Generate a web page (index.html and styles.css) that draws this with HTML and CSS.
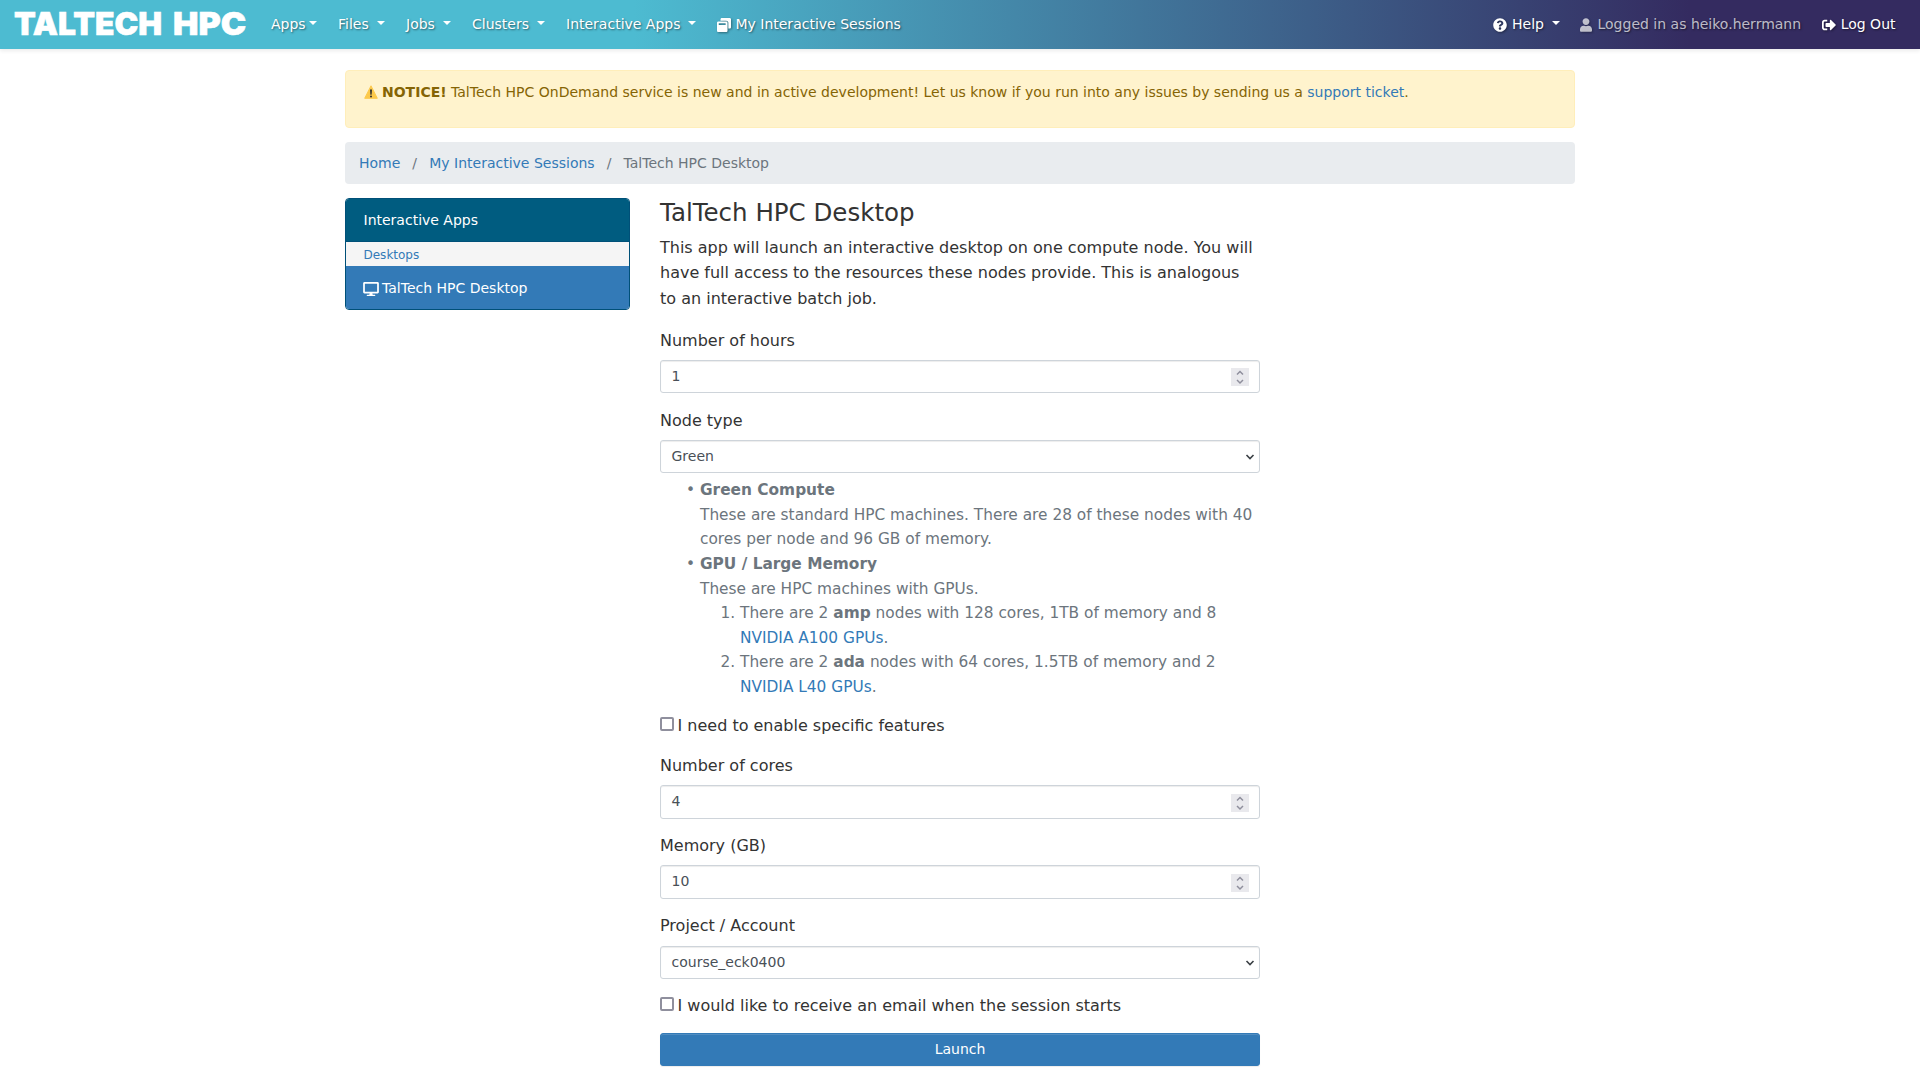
FILE: index.html
```html
<!DOCTYPE html>
<html lang="en">
<head>
<meta charset="utf-8">
<title>TalTech HPC Desktop</title>
<link rel="stylesheet" href="styles.css">
</head>
<body>
<nav class="navbar">
  <a class="brand"><svg width="233" height="49" viewBox="0 0 233 49"><text class="brand-text" y="35.2"><tspan x="-1" textLength="148" lengthAdjust="spacingAndGlyphs">TALTECH</tspan> <tspan x="158" textLength="73" lengthAdjust="spacingAndGlyphs">HPC</tspan></text></svg></a>
  <a class="nav-item apps">Apps<i class="caret"></i></a>
  <a class="nav-item files">Files <i class="caret"></i></a>
  <a class="nav-item jobs">Jobs <i class="caret"></i></a>
  <a class="nav-item clusters">Clusters <i class="caret"></i></a>
  <a class="nav-item interactive">Interactive Apps <i class="caret"></i></a>
  <a class="nav-item sessions"><svg class="icon" width="14" height="14" viewBox="0 0 512 512"><path d="M512 48v288c0 26.500-21.500 48-48 48h-48V176c0-44.100-35.900-80-80-80H128V48c0-26.500 21.500-48 48-48h288c26.500 0 48 21.500 48 48zM384 176v288c0 26.500-21.500 48-48 48H48c-26.500 0-48-21.500-48-48V176c0-26.500 21.500-48 48-48h288c26.500 0 48 21.500 48 48zm-68 28c0-6.600-5.400-12-12-12H76c-6.600 0-12 5.400-12 12v52h252v-52z"/></svg> My Interactive Sessions</a>
  <div class="nav-right">
    <a class="nav-item"><svg class="icon" width="14" height="14" viewBox="0 0 512 512"><path d="M504 256c0 137-111 248-248 248S8 393 8 256 119 8 256 8s248 111 248 248zM262.700 90c-54.500 0-89.300 23-116.500 63.800-3.500 5.300-2.400 12.400 2.700 16.300l34.700 26.300c5.200 3.900 12.600 3 16.700-2.100 17.900-22.700 30.100-35.800 57.300-35.800 20.400 0 45.700 13.100 45.700 33 0 15-12.400 22.700-32.500 34C247.100 238.500 216 254.900 216 296v4c0 6.600 5.400 12 12 12h56c6.600 0 12-5.400 12-12v-1.300c0-28.500 83.200-29.600 83.200-106.700 0-58-60.200-102-116.500-102zM256 338c-25.400 0-46 20.600-46 46s20.600 46 46 46 46-20.600 46-46-20.600-46-46-46z"/></svg> Help <i class="caret"></i></a>
    <span class="nav-item user"><svg class="icon" width="12" height="14" viewBox="0 0 448 512"><path d="M224 256c70.700 0 128-57.300 128-128S294.700 0 224 0 96 57.300 96 128s57.300 128 128 128zm89.600 32h-16.700a174 174 0 0 1-145.800 0h-16.700C60.200 288 0 348.200 0 422.400V464c0 26.500 21.500 48 48 48h352c26.500 0 48-21.500 48-48v-41.600c0-74.200-60.200-134.400-134.400-134.400z"/></svg> Logged in as heiko.herrmann</span>
    <a class="nav-item"><svg class="icon" width="14" height="14" viewBox="0 0 512 512"><path d="M497 273L329 441c-15 15-41 4.500-41-17v-96H152c-13.300 0-24-10.700-24-24v-96c0-13.300 10.700-24 24-24h136V88c0-21.400 25.900-32 41-17l168 168c9.300 9.400 9.300 24.600 0 34zM192 436v-40c0-6.600-5.400-12-12-12H96c-17.700 0-32-14.300-32-32V160c0-17.700 14.300-32 32-32h84c6.600 0 12-5.400 12-12V76c0-6.600-5.400-12-12-12H96c-53 0-96 43-96 96v192c0 53 43 96 96 96h84c6.600 0 12-5.400 12-12z"/></svg> Log Out</a>
  </div>
</nav>
<div class="container">
  <div class="alert"><svg class="warn" width="14" height="14" viewBox="0 0 14 14"><path d="M7 .8 13.300 13.300H.7Z" fill="#fcc94b" stroke="#fcc94b" stroke-linejoin="round"/><path d="M6 4.500h2L7.600 9.700H6.400Z" fill="#2f2f2f"/><circle cx="7" cy="11.400" r="1" fill="#2f2f2f"/></svg><b>NOTICE!</b> TalTech HPC OnDemand service is new and in active development! Let us know if you run into any issues by sending us a <a>support ticket</a>.</div>
  <div class="breadcrumb"><a>Home</a><span class="sep">/</span><a>My Interactive Sessions</a><span class="sep">/</span><span>TalTech HPC Desktop</span></div>
  <div class="row">
    <aside class="card">
      <div class="card-head">Interactive Apps</div>
      <div class="card-sub">Desktops</div>
      <a class="card-item"><svg class="monitor" width="16" height="14" viewBox="0 0 576 512"><path d="M528 0H48C21.500 0 0 21.500 0 48v320c0 26.500 21.500 48 48 48h192l-16 48h-72c-13.300 0-24 10.700-24 24s10.700 24 24 24h272c13.300 0 24-10.700 24-24s-10.700-24-24-24h-72l-16-48h192c26.500 0 48-21.500 48-48V48c0-26.500-21.500-48-48-48zm-16 352H64V64h448v288z"/></svg>TalTech HPC Desktop</a>
    </aside>
    <main class="main">
      <h3>TalTech HPC Desktop</h3>
      <p class="intro">This app will launch an interactive desktop on one compute node. You will have full access to the resources these nodes provide. This is analogous to an interactive batch job.</p>
      <div class="group">
        <label>Number of hours</label>
        <div class="control">1<span class="spin"><svg width="18" height="18" viewBox="0 0 18 18"><path d="M6 6.500l3-3 3 3M6 12l3 3 3-3"/></svg></span></div>
      </div>
      <div class="group node">
        <label>Node type</label>
        <div class="control select">Green<svg class="chevron" width="10" height="8" viewBox="0 0 10 8"><path d="M1.500 2 5 5.500 8.500 2"/></svg></div>
        <ul class="help">
          <li><b>Green Compute</b><br>These are standard HPC machines. There are 28 of these nodes with 40 cores per node and 96 GB of memory.</li>
          <li><b>GPU / Large Memory</b><br>These are HPC machines with GPUs.
            <ol>
              <li>There are 2 <b>amp</b> nodes with 128 cores, 1TB of memory and 8 <a>NVIDIA A100 GPUs</a>.</li>
              <li>There are 2 <b>ada</b> nodes with 64 cores, 1.5TB of memory and 2 <a>NVIDIA L40 GPUs</a>.</li>
            </ol>
          </li>
        </ul>
      </div>
      <div class="check features"><span class="box"></span>I need to enable specific features</div>
      <div class="group compact">
        <label>Number of cores</label>
        <div class="control tall">4<span class="spin"><svg width="18" height="18" viewBox="0 0 18 18"><path d="M6 6.500l3-3 3 3M6 12l3 3 3-3"/></svg></span></div>
      </div>
      <div class="group compact">
        <label>Memory (GB)</label>
        <div class="control tall">10<span class="spin"><svg width="18" height="18" viewBox="0 0 18 18"><path d="M6 6.500l3-3 3 3M6 12l3 3 3-3"/></svg></span></div>
      </div>
      <div class="group account">
        <label>Project / Account</label>
        <div class="control select">course_eck0400<svg class="chevron" width="10" height="8" viewBox="0 0 10 8"><path d="M1.500 2 5 5.500 8.500 2"/></svg></div>
      </div>
      <div class="check"><span class="box"></span>I would like to receive an email when the session starts</div>
      <button class="launch">Launch</button>
    </main>
  </div>
</div>
</body>
</html>
```
FILE: styles.css
```css
* { box-sizing: border-box; }
body {
  margin: 0;
  height: 1080px;
  overflow: hidden;
  background: #fff;
  color: #333;
  font: 14px/22.4px "DejaVu Sans", sans-serif;
}
a { color: #337ab7; text-decoration: none; }

.navbar {
  display: flex;
  align-items: center;
  height: 49px;
  padding: 0 24.5px 0 15px;
  background: linear-gradient(90deg, #4dbbd1 33%, #342b60 88%);
  box-shadow: 0 2px 4px rgba(0, 0, 0, .08);
}
.brand { display: flex; width: 233px; margin-right: 23px; }
.brand svg { overflow: visible; }
.brand-text { font: 900 32px Inter, sans-serif; fill: #fff; stroke: #fff; stroke-width: .6px; }
.nav-item {
  display: flex;
  align-items: center;
  color: #fff;
  white-space: pre;
  text-shadow: 1px 1px 2px rgba(0, 0, 0, .5);
}
.apps { width: 67px; }
.files { width: 68px; }
.jobs { width: 66px; }
.clusters { width: 94px; }
.interactive { width: 151px; }
.user { color: rgba(255, 255, 255, .7); }
.icon { fill: currentColor; filter: drop-shadow(1px 1px 1px rgba(0, 0, 0, .4)); }
.caret {
  margin: -3px 0 0 3.5px;
  border: 4px solid transparent;
  border-top-color: #fff;
  border-bottom: 0;
}
.nav-right { display: flex; gap: 20.5px; margin-left: auto; }
.nav-right .icon { margin-right: .6px; }

.container { width: 1230px; margin: 21px auto 0; }
.alert {
  height: 58px;
  padding: 10px 18px;
  border: 1px solid #ffeeba;
  border-radius: 4px;
  background: #fff3cd;
  color: #856404;
}
.warn { margin-right: 4px; vertical-align: -2px; }
.breadcrumb {
  display: flex;
  align-items: center;
  height: 42px;
  margin: 14px 0;
  padding: 0 14px;
  border-radius: 4px;
  background: #e9ecef;
  color: #6c757d;
}
.sep { margin: 0 12.2px 0 12px; }
.row { display: flex; align-items: flex-start; gap: 30px; }
.card {
  width: 285px;
  border: 1px solid #005078;
  border-radius: 4px;
  overflow: hidden;
}
.card-head { height: 43px; padding: 10px 17.5px; border-bottom: 1px solid #005078; background: #005c80; color: #fff; }
.card-sub { height: 24px; padding: 2px 17.5px; background: #f5f5f5; color: #337ab7; font-size: 12px; }
.card-item { display: flex; align-items: center; height: 43px; padding: 2px 17px 0; background: #337ab7; color: #fff; }
.monitor { margin-right: 3px; fill: #fff; }

.main { width: 600px; font-size: 16px; line-height: 25.6px; }
h3 { margin: 0 0 7px; padding-top: 1px; font-size: 24.5px; font-weight: 400; line-height: 28.8px; }
.intro { margin: 0 0 16px; }
.group { margin-bottom: 15px; }
label { display: block; height: 32px; }
.control {
  display: flex;
  align-items: center;
  justify-content: space-between;
  height: 33px;
  padding: 1px 10px 0 10.5px;
  border: 1px solid #ced4da;
  border-radius: 3px;
  box-shadow: inset 0 1px 1px rgba(0, 0, 0, .075);
  color: #495057;
  font-size: 14px;
}
.tall { height: 34px; }
.select { padding-right: 4px; }
.spin { display: flex; width: 18px; height: 18px; margin-top: 1px; background: #e9e9ed; }
.spin path { fill: none; stroke: #8f8f9d; stroke-width: 1.5; }
.chevron { margin-top: 1px; }
.chevron path { fill: none; stroke: #3b4045; stroke-width: 1.6; }
.node, .compact, .account { margin-bottom: 14px; }
.account label { height: 33px; }
.help { margin: 5.700px 0 0; padding-left: 40px; list-style-type: "• "; color: #6c757d; font-size: 15.36px; line-height: 24.58px; }
.help ol { margin: 0; padding-left: 40px; }
.check { display: flex; height: 26px; margin-bottom: 14.300px; }
.features { margin-bottom: 13.300px; }
.box { width: 14px; height: 14px; margin: 4px 3.5px 0 0; border: 2px solid #8f8f9d; border-radius: 2px; }
.launch {
  display: block;
  width: 100%;
  height: 33px;
  padding: 0 0 2px;
  border: 1px solid #337ab7;
  border-radius: 3px;
  background: #337ab7;
  box-shadow: inset 0 1px 0 rgba(255, 255, 255, .15), 0 1px 1px rgba(0, 0, 0, .075);
  color: #fff;
  font: 14px "DejaVu Sans", sans-serif;
}
```
